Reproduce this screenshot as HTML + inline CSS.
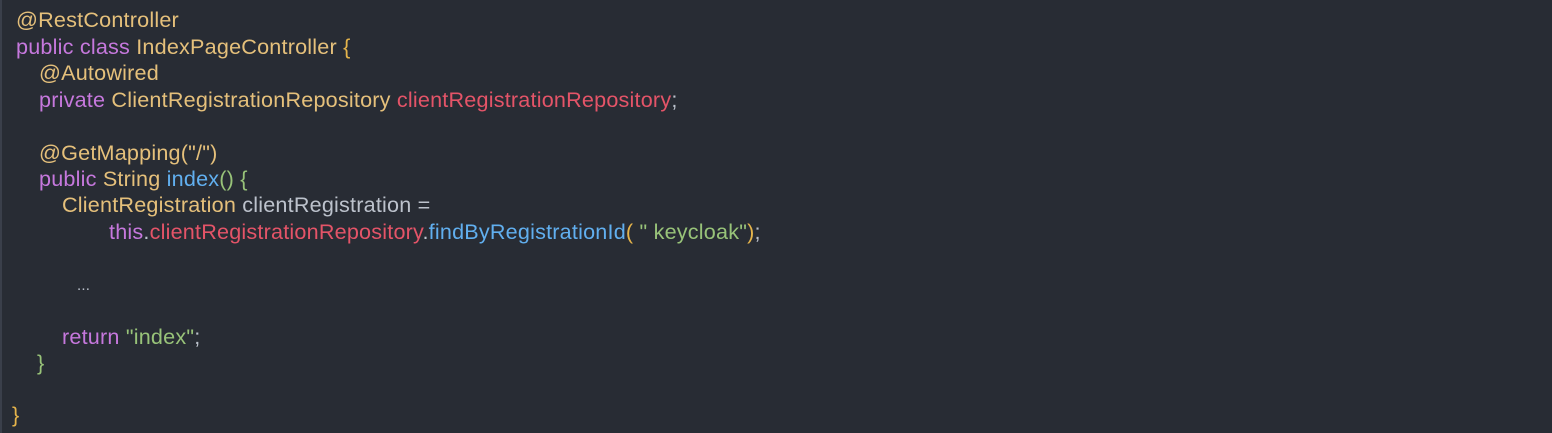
<!DOCTYPE html>
<html><head><meta charset="utf-8"><style>
html,body{margin:0;padding:0}
body{width:1552px;height:433px;background:#282c34;overflow:hidden;position:relative;font-family:"Liberation Sans","Noto Sans CJK KR",sans-serif;font-size:21.6px;color:#abb2bf}
.l{position:absolute;white-space:pre;line-height:26px;letter-spacing:0.2px}
.k{color:#c678dd}.y{color:#e5c07b}.r{color:#e45468}.b{color:#61afef}.g{color:#98c379}.w{color:#bcc2cc}.o{color:#e5b44b}
.edge{position:absolute;left:0;top:0;width:2px;height:433px;background:#3a3f4a}
</style></head><body>
<div class="edge"></div>
<div class="l y" style="left:16px;top:7px">@RestController</div>
<div class="l" style="left:16px;top:34px"><span class="k">public class</span> <span class="y">IndexPageController</span> <span class="o">{</span></div>
<div class="l y" style="left:39px;top:60px">@Autowired</div>
<div class="l" style="left:39px;top:87px"><span class="k">private</span> <span class="y">ClientRegistrationRepository</span> <span class="r">clientRegistrationRepository</span><span class="w">;</span></div>
<div class="l y" style="left:39px;top:140px">@GetMapping("/")</div>
<div class="l" style="left:39px;top:166px"><span class="k">public</span> <span class="y">String</span> <span class="b">index</span><span class="g">() {</span></div>
<div class="l" style="left:62px;top:192px"><span class="y">ClientRegistration</span> <span class="w">clientRegistration =</span></div>
<div class="l" style="left:109px;top:219px"><span class="k">this</span><span class="w">.</span><span class="r">clientRegistrationRepository</span><span class="w">.</span><span class="b">findByRegistrationId</span><span class="o">(</span> <span class="g">" keycloak"</span><span class="o">)</span><span class="w">;</span></div>
<div class="l w" style="left:77px;top:273px;font-size:15px">...</div>
<div class="l" style="left:62px;top:324px"><span class="k">return</span> <span class="g">"index"</span><span class="w">;</span></div>
<div class="l g" style="left:37px;top:350px">}</div>
<div class="l o" style="left:12px;top:402px">}</div>
</body></html>
